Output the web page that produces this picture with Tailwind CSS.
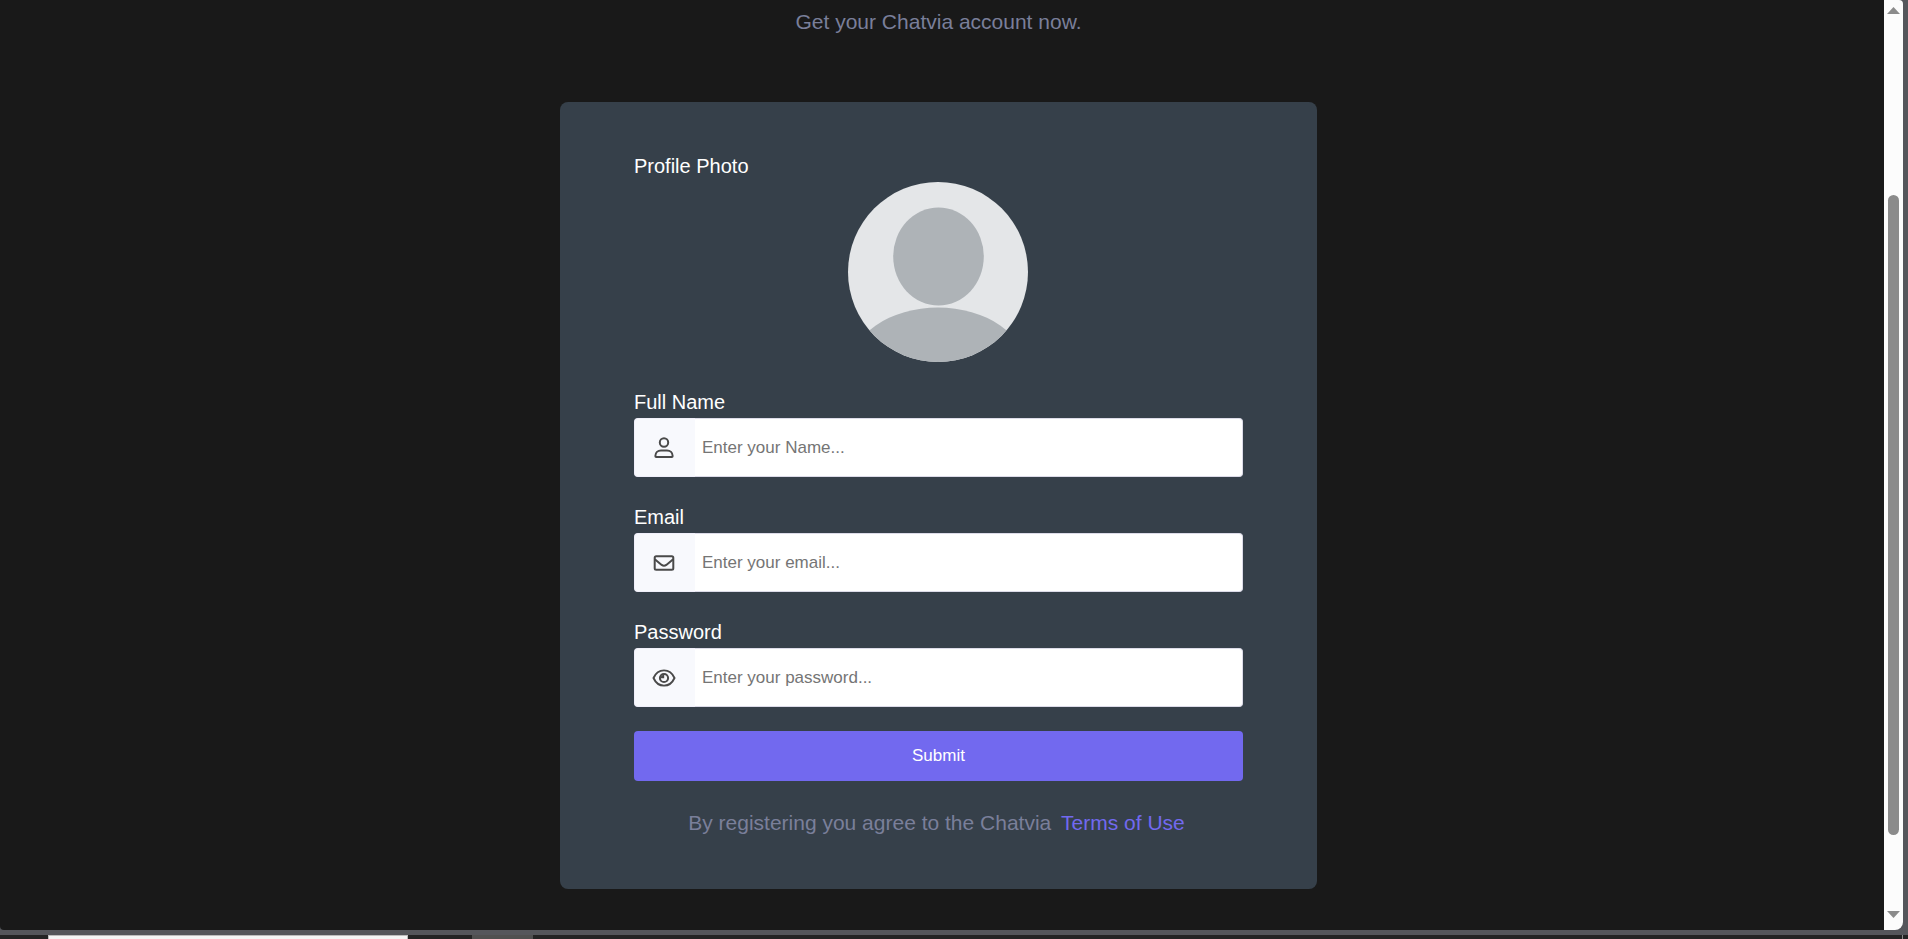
<!DOCTYPE html>
<html lang="en">
<head>
<meta charset="utf-8">
<meta name="viewport" content="width=device-width, initial-scale=1">
<title>Chatvia - Register</title>
<script src="https://cdn.jsdelivr.net/npm/@tailwindcss/browser@4"></script>
</head>
<body class="flex h-screen flex-col overflow-hidden bg-[#55565b] font-['Liberation_Sans',Arial,sans-serif]">
<div class="flex min-h-0 flex-1 pr-[5px]">
  <main class="flex min-w-0 flex-1 flex-col items-center overflow-hidden rounded-bl-sm bg-[#191919] pt-2 pr-[7px]">
    <p class="text-[21px] leading-7 text-[#7a7f9a]">Get your Chatvia account now.</p>
    <form class="mt-[66px] flex w-full max-w-[757px] flex-col rounded-lg bg-[#36404a] px-[74px] py-[52px] text-xl leading-6 text-white">
      <span>Profile Photo</span>
      <svg class="mt-1 mr-px size-[180px] self-center rounded-full" viewBox="0 0 180 180" role="img" aria-label="Profile photo">
        <rect width="180" height="180" fill="#e4e6e8"/>
        <ellipse cx="90.500" cy="74.500" rx="45.300" ry="49" fill="#aeb3b7"/>
        <ellipse cx="90" cy="187" rx="88" ry="61.500" fill="#aeb3b7"/>
      </svg>

      <label for="name" class="mt-7">Full Name</label>
      <div class="mt-1 flex h-[59px]">
        <span class="flex w-[61px] items-center justify-center rounded-l-sm border border-r-0 border-[#f0effa] bg-[#f8f9fd] pr-0.5">
          <svg class="size-6" viewBox="0 0 24 24" fill="none" stroke="#4a4a4a" stroke-width="2" aria-hidden="true">
            <circle cx="12" cy="6.500" r="4.200"/>
            <path d="M4.100 21h15.800c.4 0 .7-.3.700-.7v-.500c0-3-2.400-5.400-5.600-5.400H9c-3.200 0-5.600 2.400-5.600 5.400v.500c0 .4.300.7.700.7Z"/>
          </svg>
        </span>
        <input id="name" type="text" placeholder="Enter your Name..." class="min-w-0 flex-1 rounded-r-sm border border-l-0 border-[#dcdbe8] bg-white px-[7px] text-[17px] text-black outline-none placeholder:text-[#757575]">
      </div>

      <label for="email" class="mt-7">Email</label>
      <div class="mt-1 flex h-[59px]">
        <span class="flex w-[61px] items-center justify-center rounded-l-sm border border-r-0 border-[#f0effa] bg-[#f8f9fd] pr-0.5">
          <svg class="size-6" viewBox="0 0 24 24" fill="none" stroke="#4a4a4a" stroke-width="2" aria-hidden="true">
            <rect x="2.700" y="5.200" width="18.600" height="13.600" rx="1.500"/>
            <path d="M2.800 8.200l6.900 5.700q2.300 1.800 4.600 0l6.900-5.700"/>
          </svg>
        </span>
        <input id="email" type="email" placeholder="Enter your email..." class="min-w-0 flex-1 rounded-r-sm border border-l-0 border-[#dcdbe8] bg-white px-[7px] text-[17px] text-black outline-none placeholder:text-[#757575]">
      </div>

      <label for="password" class="mt-7">Password</label>
      <div class="mt-1 flex h-[59px]">
        <span class="flex w-[61px] items-center justify-center rounded-l-sm border border-r-0 border-[#f0effa] bg-[#f8f9fd] pr-0.5">
          <svg class="size-6" viewBox="0 0 24 24" fill="none" stroke="#4a4a4a" stroke-width="1.9" aria-hidden="true">
            <path d="M1.500 12C3.500 7.500 7.400 4.400 12 4.400S20.500 7.500 22.500 12C20.500 16.500 16.600 19.600 12 19.600S3.500 16.500 1.500 12Z"/>
            <circle cx="12" cy="12" r="4.100" stroke-width="2"/>
            <path d="M12.200 9v3.200H9Q8.500 8.500 12.200 9Z" fill="#4a4a4a" stroke="none"/>
          </svg>
        </span>
        <input id="password" type="password" placeholder="Enter your password..." class="min-w-0 flex-1 rounded-r-sm border border-l-0 border-[#dcdbe8] bg-white px-[7px] text-[17px] text-black outline-none placeholder:text-[#757575]">
      </div>

      <button type="submit" class="mt-6 h-[50px] rounded-sm bg-[#7269ef] text-[17px] text-white">Submit</button>
      <p class="mt-7 text-center text-[21px] leading-7 text-[#7a7f9a]">By registering you agree to the Chatvia <a href="#" class="mx-1 text-[#7269ef]">Terms of Use</a></p>
    </form>
  </main>
  <div class="flex w-[19px] flex-col items-center rounded-tr-sm rounded-br-lg bg-[#fcfcfc] pt-[7px] pb-3" aria-hidden="true">
    <svg class="h-[7px] w-[13px]" viewBox="0 0 13 7"><path d="M6.500 0L13 7H0Z" fill="#8b8b8b"/></svg>
    <div class="min-h-0 flex-[181]"></div>
    <div class="w-[11px] min-h-0 flex-[640] rounded-full bg-[#8b8b8b]"></div>
    <div class="min-h-0 flex-[76]"></div>
    <svg class="h-[7px] w-[13px]" viewBox="0 0 13 7"><path d="M0 0H13L6.500 7Z" fill="#8b8b8b"/></svg>
  </div>
</div>
<div class="mt-[5px] flex h-1 bg-[#242424]" aria-hidden="true">
  <div class="ml-12 w-[360px] border-x border-t border-[#bdbdbd] bg-[#f5f5f5]"></div>
  <div class="ml-16 w-[61px] bg-[#505050]"></div>
  <div class="mr-[5px] ml-auto w-px bg-[#8b8b8b]"></div>
</div>
</body>
</html>
